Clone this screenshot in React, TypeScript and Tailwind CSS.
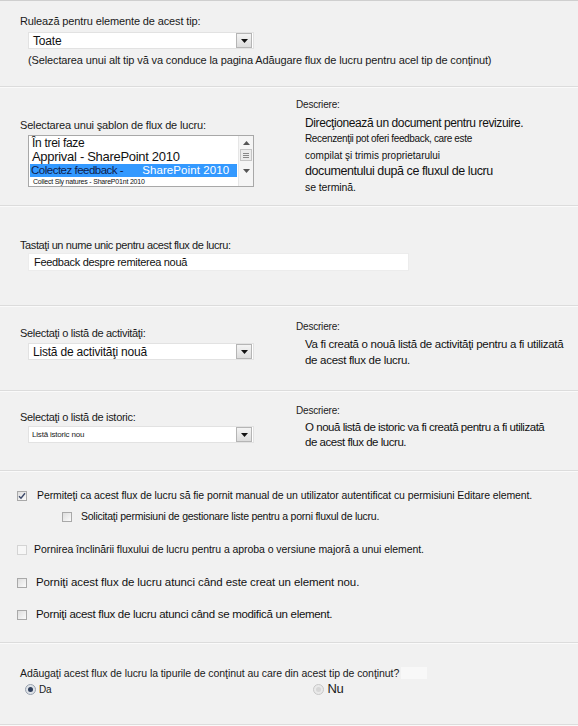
import React from 'react';

const FONT = { fontFamily: '"Liberation Sans", Arial, sans-serif' };

/** Drop-down box in the old Windows style: white field with a small grey arrow button. */
const SelectBox: React.FC<{ value: string; small?: boolean }> = ({ value, small }) => (
  <div className="flex h-[17px] w-[226px] items-center border border-[#e2e2e2] bg-white">
    <span
      className={
        small
          ? 'flex-1 pl-[3px] text-[8px] tracking-[-0.2px] text-[#222]'
          : 'flex-1 pl-[4px] text-[12px] tracking-[-0.2px] text-[#111]'
      }
    >
      {value}
    </span>
    <div className="mr-[1px] flex h-[15px] w-[16px] items-center justify-center border border-[#b5b5b5] bg-gradient-to-b from-[#f4f4f4] to-[#dcdcdc]">
      <svg width="7" height="4" viewBox="0 0 7 4">
        <path d="M0 0 L7 0 L3.5 4 Z" fill="#111" />
      </svg>
    </div>
  </div>
);

const CheckBox: React.FC<{ checked?: boolean; faint?: boolean }> = ({ checked, faint }) => (
  <div
    className={
      faint
        ? 'flex h-[10px] w-[10px] shrink-0 items-center justify-center border border-[#d4d4d4] bg-[#f7f7f7]'
        : 'flex h-[10px] w-[10px] shrink-0 items-center justify-center border border-[#a9a9a9] bg-gradient-to-br from-[#dedede] to-[#fbfbfb]'
    }
  >
    {checked && (
      <svg width="8" height="8" viewBox="0 0 8 8">
        <path d="M1 4.2 L3 6.3 L7 1.2" fill="none" stroke="#3d4a6b" strokeWidth="1.4" />
      </svg>
    )}
  </div>
);

const Radio: React.FC<{ selected?: boolean }> = ({ selected }) => (
  <div
    className={
      selected
        ? 'flex h-[11px] w-[11px] shrink-0 items-center justify-center rounded-full border border-[#9aa3b0] bg-[#dfe3e8]'
        : 'flex h-[11px] w-[11px] shrink-0 items-center justify-center rounded-full border border-[#c8c8c8] bg-[#e9e9e9]'
    }
  >
    {selected && <div className="h-[5px] w-[5px] rounded-full bg-[#2f3f5c]" />}
    {!selected && <div className="h-[5px] w-[5px] rounded-full bg-[#d6d6d6]" />}
  </div>
);

const Section: React.FC<{ className: string; children: React.ReactNode }> = ({ className, children }) => (
  <div className={`border-b border-[#dcdcdc] shadow-[0_1px_0_#fafafa] ${className}`}>{children}</div>
);

const Descriere: React.FC = () => (
  <div className="h-[13px] text-[10px] leading-[13px] tracking-[-0.2px] text-[#222]">Descriere:</div>
);

export default function App() {
  return (
    <div style={FONT} className="h-[726px] w-[578px] overflow-hidden border-t border-[#cfcfcf] bg-[#f1f1f1] text-[#1a1a1a]">
      {/* Content type */}
      <Section className="h-[86px] pl-[20px] pt-[13px]">
        <div className="text-[11px] leading-[14px] tracking-[-0.13px]">Rulează pentru elemente de acest tip:</div>
        <div className="ml-[8px] mt-[4px]">
          <SelectBox value="Toate" />
        </div>
        <div className="ml-[8px] mt-[4px] whitespace-nowrap text-[11px] leading-[14px] tracking-[-0.13px]">
          (Selectarea unui alt tip vă va conduce la pagina Adăugare flux de lucru pentru acel tip de conţinut)
        </div>
      </Section>

      {/* Workflow template */}
      <Section className="flex h-[119px]">
        <div className="w-[296px] shrink-0 pl-[20px] pt-[31px]">
          <div className="text-[11px] leading-[14px] tracking-[-0.17px]">Selectarea unui şablon de flux de lucru:</div>
          <div className="ml-[8px] mt-[3px] flex h-[52px] w-[226px] border border-[#a8a8a8] bg-white">
            <div className="min-w-0 flex-1 overflow-hidden whitespace-nowrap pl-[1px] pt-[1px]">
              <div className="h-[12px] pl-[2px] text-[12px] leading-[12px] tracking-[-0.3px] text-[#111]">În trei faze</div>
              <div className="h-[15px] pl-[2px] text-[13px] leading-[15px] tracking-[-0.3px] text-[#111]">Apprival - SharePoint 2010</div>
              <div className="mr-[1px] flex h-[13px] items-center bg-[#3399ff] pl-[1px] text-[11.5px] leading-[13px]">
                <span className="tracking-[-0.5px] text-[#10204a]">Colectez feedback -</span>
                <span className="ml-[19px] tracking-[0.1px] text-white">SharePoint 2010</span>
              </div>
              <div className="h-[10px] pl-[3px] text-[7px] leading-[10px] tracking-[-0.2px] text-[#111]">
                Collect Sly natures - ShareP01nt 2010
              </div>
            </div>
            <div className="flex w-[15px] shrink-0 flex-col items-center border-l border-[#e6e6e6] bg-[#f5f5f5]">
              <svg className="mt-[5px]" width="7" height="4" viewBox="0 0 7 4">
                <path d="M0 4 L7 4 L3.5 0 Z" fill="#555" />
              </svg>
              <div className="mt-[4px] flex h-[12px] w-[12px] flex-col items-center justify-center gap-[1px] border border-[#c4c4c4] bg-[#ececec]">
                <div className="h-px w-[6px] bg-[#888]" />
                <div className="h-px w-[6px] bg-[#888]" />
                <div className="h-px w-[6px] bg-[#888]" />
              </div>
              <svg className="mt-[8px]" width="7" height="4" viewBox="0 0 7 4">
                <path d="M0 0 L7 0 L3.5 4 Z" fill="#555" />
              </svg>
            </div>
          </div>
        </div>
        <div className="pt-[11px]">
          <Descriere />
          <div className="ml-[9px] mt-[4px] whitespace-nowrap text-[#111]">
            <div className="h-[16px] text-[12px] leading-[16px] tracking-[-0.4px]">Direcţionează un document pentru revizuire.</div>
            <div className="h-[16px] text-[10px] leading-[16px] tracking-[-0.35px]">Recenzenţii pot oferi feedback, care este</div>
            <div className="h-[17px] text-[10px] leading-[17px] tracking-[0px]">compilat şi trimis proprietarului</div>
            <div className="h-[15px] text-[12.5px] leading-[15px] tracking-[-0.42px]">documentului după ce fluxul de lucru</div>
            <div className="h-[16px] text-[10.5px] leading-[16px] tracking-[-0.1px]">se termină.</div>
          </div>
        </div>
      </Section>

      {/* Unique name */}
      <Section className="h-[100px] pl-[20px] pt-[32px]">
        <div className="text-[11px] leading-[14px] tracking-[-0.4px]">Tastaţi un nume unic pentru acest flux de lucru:</div>
        <div className="ml-[8px] mt-[1px] flex h-[18px] w-[381px] items-center border border-[#ececec] bg-white pl-[5px] text-[11px] tracking-[-0.3px] text-[#111]">
          Feedback despre remiterea nouă
        </div>
      </Section>

      {/* Task list */}
      <Section className="flex h-[85px]">
        <div className="w-[296px] shrink-0 pl-[20px] pt-[20px]">
          <div className="text-[11px] leading-[14px] tracking-[-0.3px]">Selectaţi o listă de activităţi:</div>
          <div className="ml-[8px] mt-[3px]">
            <SelectBox value="Listă de activităţi nouă" />
          </div>
        </div>
        <div className="pt-[14px]">
          <Descriere />
          <div className="ml-[9px] mt-[3px] whitespace-nowrap text-[11.5px] leading-[16px] tracking-[-0.3px] text-[#111]">
            <div>Va fi creată o nouă listă de activităţi pentru a fi utilizată</div>
            <div>de acest flux de lucru.</div>
          </div>
        </div>
      </Section>

      {/* History list */}
      <Section className="flex h-[80px]">
        <div className="w-[296px] shrink-0 pl-[20px] pt-[19px]">
          <div className="text-[11px] leading-[14px] tracking-[-0.3px]">Selectaţi o listă de istoric:</div>
          <div className="ml-[8px] mt-[2px]">
            <SelectBox value="Listă istoric nou" small />
          </div>
        </div>
        <div className="pt-[13px]">
          <Descriere />
          <div className="ml-[9px] mt-[3px] whitespace-nowrap text-[11.5px] leading-[15px] tracking-[-0.47px] text-[#111]">
            <div>O nouă listă de istoric va fi creată pentru a fi utilizată</div>
            <div>de acest flux de lucru.</div>
          </div>
        </div>
      </Section>

      {/* Start options */}
      <Section className="h-[172px] whitespace-nowrap pl-[17px] pt-[18px] text-[#111]">
        <div className="flex h-[14px] items-center gap-[10px] text-[10.5px] tracking-[-0.1px]">
          <CheckBox checked />
          <span>Permiteţi ca acest flux de lucru să fie pornit manual de un utilizator autentificat cu permisiuni Editare element.</span>
        </div>
        <div className="ml-[45px] mt-[7px] flex h-[14px] items-center gap-[9px] text-[10.5px] tracking-[-0.25px]">
          <CheckBox />
          <span>Solicitaţi permisiuni de gestionare liste pentru a porni fluxul de lucru.</span>
        </div>
        <div className="mt-[19px] flex h-[14px] items-center gap-[7px] text-[10.5px] tracking-[-0.06px]">
          <CheckBox faint />
          <span>Pornirea înclinării fluxului de lucru pentru a aproba o versiune majoră a unui element.</span>
        </div>
        <div className="mt-[19px] flex h-[14px] items-center gap-[9px] text-[11.5px] tracking-[-0.1px]">
          <CheckBox />
          <span>Porniţi acest flux de lucru atunci când este creat un element nou.</span>
        </div>
        <div className="mt-[18px] flex h-[14px] items-center gap-[9px] text-[11.5px] tracking-[-0.3px]">
          <CheckBox />
          <span>Porniţi acest flux de lucru atunci când se modifică un element.</span>
        </div>
      </Section>

      {/* Add to child content types */}
      <Section className="h-[82px] pl-[20px] pt-[23px]">
        <div className="flex items-center whitespace-nowrap">
          <span className="text-[10.5px] leading-[14px] tracking-[-0.07px]">
            Adăugaţi acest flux de lucru la tipurile de conţinut au care din acest tip de conţinut?
          </span>
          <span className="ml-[2px] h-[12px] w-[26px] bg-[#f8f8f8]" />
        </div>
        <div className="mt-[2px] flex h-[14px] items-center">
          <div className="ml-[5px] flex items-center gap-[3px] text-[10px] tracking-[-0.2px]">
            <Radio selected />
            <span>Da</span>
          </div>
          <div className="ml-[262px] flex items-center gap-[3px] text-[13px] tracking-[-0.3px]">
            <Radio />
            <span>Nu</span>
          </div>
        </div>
      </Section>
    </div>
  );
}
